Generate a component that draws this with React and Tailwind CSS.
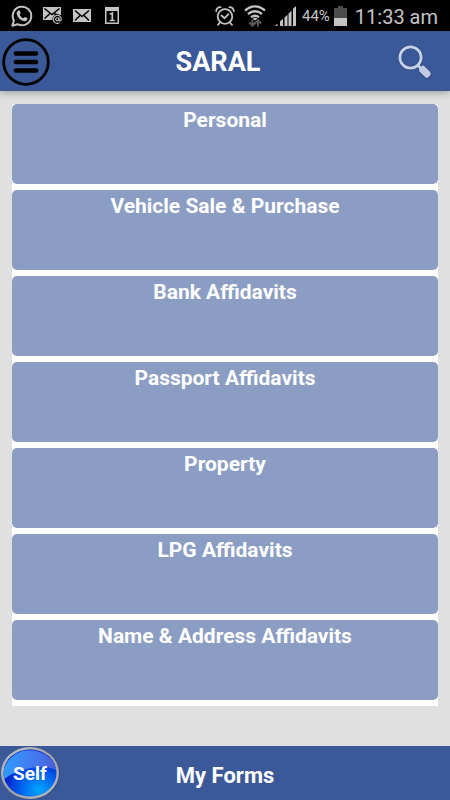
import React from "react";

const categories = [
  "Personal",
  "Vehicle Sale & Purchase",
  "Bank Affidavits",
  "Passport Affidavits",
  "Property",
  "LPG Affidavits",
  "Name & Address Affidavits",
];

function WhatsAppIcon() {
  return (
    <svg width="22" height="22" viewBox="0 0 22 22" aria-hidden="true">
      <path d="M1.3 20.8 2.9 15.6A9.3 9.3 0 1 1 6.6 19.2Z" fill="none" stroke="#c4c4c4" strokeWidth="2" strokeLinejoin="round" />
      <path
        d="M7.2 5.6c.5-.5 1.2-.4 1.5.2l.9 2.1c.2.500-.9 1.4-.9 1.8.6 1.5 2 2.9 3.6 3.5.5.1 1.2-1.3 1.7-1.2l2.2 1.1c.5.300.3 1.3-.1 1.9-.8 1.1-2.3 1.4-3.7 1-3.300-1-5.800-3.500-6.600-6.400-.4-1.500.3-3.100 1.400-4Z"
        fill="#c4c4c4"
      />
    </svg>
  );
}

function MailAtIcon() {
  return (
    <svg width="20" height="18" viewBox="0 0 20 18" aria-hidden="true">
      <path d="M0 0h18v8.500a5 5 0 0 0-7.500 4.500H0Z" fill="#c4c4c4" />
      <path d="m1.500 1.500 7.500 6 7.500-6M1.500 11.500 7 6.500M16.500 9 11 6.500" fill="none" stroke="#000" strokeWidth="1.600" />
      <circle cx="14.500" cy="12.500" r="5.200" fill="#000" />
      <circle cx="14.300" cy="12.300" r="1.600" fill="none" stroke="#c4c4c4" strokeWidth="1.100" />
      <path d="M16 10.500v2.400c0 1.600 2.300 1.300 2.300-.7a4 4 0 1 0-1.700 3.400" fill="none" stroke="#c4c4c4" strokeWidth="1.100" />
    </svg>
  );
}

function MailIcon() {
  return (
    <svg width="18" height="13" viewBox="0 0 18 13" aria-hidden="true">
      <path d="M0 0h18v13H0Z" fill="#c4c4c4" />
      <path d="m2 1.500 7 6 7-6M2 11.500l5-5M16 11.500l-5-5" fill="none" stroke="#000" strokeWidth="1.500" />
    </svg>
  );
}

function CalendarIcon() {
  return (
    <svg width="14" height="17" viewBox="0 0 14 17" aria-hidden="true">
      <path d="M0 0h14v17H0Z" fill="#c4c4c4" />
      <path d="M1.500 4h11v11.500h-11Z" fill="#000" />
      <path d="M4.800 7.200 7.300 6v8M4.800 13.500h5" fill="none" stroke="#c4c4c4" strokeWidth="1.700" />
    </svg>
  );
}

function AlarmIcon() {
  return (
    <svg width="20" height="20" viewBox="0 0 20 20" aria-hidden="true">
      <g fill="none" stroke="#c4c4c4" strokeWidth="1.800" strokeLinecap="round">
        <circle cx="10" cy="10.500" r="7.300" />
        <path d="M1.200 5A4 4 0 0 1 5.500 1.200M18.800 5a4 4 0 0 0-4.300-3.800M5 16.500l-2 2.300M15 16.500l2 2.300" />
        <path d="m6.500 9.500 3 2.700 4-4" />
      </g>
    </svg>
  );
}

function WifiIcon() {
  return (
    <svg width="22" height="22" viewBox="0 0 22 22" aria-hidden="true">
      <g fill="none" stroke="#c4c4c4" strokeWidth="2.300">
        <path d="M1 5.500Q11-2.700 21 5.500M4 9q7-5.500 14 0M7 12.200q4-3 8 0" />
      </g>
      <path d="m11 15.500-2.500-2.100q2.500-1.500 5 0Z" fill="#c4c4c4" />
      <path d="M8.500 14.500v6M5.500 17.500l3 3.300 3-3.300M14 21.500v-6M11 18.500l3-3.300 3 3.300" fill="none" stroke="#5a5a5a" strokeWidth="2" />
    </svg>
  );
}

function SignalIcon() {
  return (
    <svg width="21" height="20" viewBox="0 0 21 20" aria-hidden="true">
      <path d="M0 20 2.500 17.500V20ZM5 15.500l3-2.800V20H5ZM9.500 11.500l3-2.800V20h-3ZM13.500 7.500l3-2.800V20h-3ZM18 2.800 21 0v20h-3Z" fill="#c4c4c4" />
    </svg>
  );
}

function BatteryIcon() {
  return (
    <svg width="13" height="20" viewBox="0 0 13 20" aria-hidden="true">
      <path d="M4 0h5v2h4v10H0V2h4Z" fill="#4c4c4c" />
      <path d="M0 12h13v8H0Z" fill="#c4c4c4" />
    </svg>
  );
}

function MenuIcon() {
  return (
    <svg width="48" height="48" viewBox="0 0 48 48" aria-hidden="true">
      <circle cx="24" cy="24" r="22.300" fill="none" stroke="#000" strokeWidth="2.800" />
      <path d="M14 15.500h20M14 24h20M14 32.500h20" stroke="#000" strokeWidth="4.600" strokeLinecap="round" />
    </svg>
  );
}

function SearchIcon() {
  return (
    <svg width="34" height="35" viewBox="0 0 34 35" aria-hidden="true">
      <g fill="none" stroke="#2b457f" strokeOpacity=".45">
        <circle cx="12.500" cy="12.500" r="10.600" strokeWidth="4.600" />
        <path d="m24.500 24.500 4.500 5" strokeWidth="9.500" strokeLinecap="round" />
      </g>
      <circle cx="12.500" cy="12.500" r="10.600" fill="none" stroke="#c9d1e6" strokeWidth="2.700" />
      <path d="m19.800 20.200 3 3" stroke="#c9d1e6" strokeWidth="2.800" />
      <path d="m21.500 23.500 2.300-2.600q1.400-.8 2.600.3l5.800 5.900q1.200 1.600 0 3.200l-1.900 1.900q-1.600 1-3 0L21.500 26.500q-1-1.500 0-3Z" fill="#c1cae2" />
    </svg>
  );
}

function Orb() {
  return (
    <svg className="block" width="60" height="54" viewBox="0 0 60 54" aria-hidden="true">
      <defs>
        <linearGradient id="rim" x1="0" y1="0" x2="1" y2="1">
          <stop offset="0" stopColor="#c2c5ca" />
          <stop offset=".5" stopColor="#9da0a8" />
          <stop offset="1" stopColor="#b9bbc0" />
        </linearGradient>
        <radialGradient id="deep" cx=".67" cy=".86" r=".7">
          <stop offset="0" stopColor="#00a8ff" />
          <stop offset=".45" stopColor="#0068f0" />
          <stop offset="1" stopColor="#0018c8" />
        </radialGradient>
        <linearGradient id="gloss" x1="0" y1=".4" x2="1" y2=".5">
          <stop offset="0" stopColor="#2f9dfc" />
          <stop offset=".5" stopColor="#437df0" />
          <stop offset="1" stopColor="#4a60dc" />
        </linearGradient>
      </defs>
      <ellipse cx="30.500" cy="27.500" rx="29.300" ry="26" fill="#2c4377" />
      <ellipse cx="30" cy="27" rx="29" ry="26" fill="url(#rim)" />
      <ellipse cx="30" cy="27" rx="26.500" ry="23.600" fill="url(#deep)" />
      <path d="M4.300 33A26.500 23.600 0 1 1 56.300 24Q46 19 31 22 14 25 4.300 33Z" fill="url(#gloss)" />
    </svg>
  );
}

export default function App() {
  return (
    <div className="flex min-h-screen flex-col bg-[#e0e0e0] font-['Roboto',sans-serif]">
      <div className="flex h-[31px] items-center justify-between bg-black pr-3 pl-[11px] text-[#c4c4c4]">
        <div className="flex items-center gap-[10px]">
          <WhatsAppIcon />
          <MailAtIcon />
          <MailIcon />
          <div className="pl-1">
            <CalendarIcon />
          </div>
        </div>
        <div className="flex items-center">
          <div className="flex items-center gap-[9px]">
            <AlarmIcon />
            <WifiIcon />
            <SignalIcon />
          </div>
          <span className="pt-[2px] pl-[6px] text-[15px]">44%</span>
          <div className="pr-2 pl-1">
            <BatteryIcon />
          </div>
          <span className="pt-[2px] text-xl whitespace-nowrap">11:33 am</span>
        </div>
      </div>

      <header className="z-10 grid h-[60px] grid-cols-[1fr_auto_1fr] items-center bg-[#3b5998] px-[2px] pt-[2px] shadow-[0_1px_8px_rgba(0,0,0,0.35)]">
        <button type="button" aria-label="Menu" className="justify-self-start">
          <MenuIcon />
        </button>
        <h1 className="pr-[14px] text-[27px] font-bold text-white">SARAL</h1>
        <button type="button" aria-label="Search" className="justify-self-end pr-4">
          <SearchIcon />
        </button>
      </header>

      <main className="flex-1 px-3 pt-[13px]">
        <div className="flex flex-col gap-[6px] bg-white pb-[6px]">
          {categories.map((name) => (
            <button
              key={name}
              type="button"
              className="flex h-20 items-start justify-center rounded-[5px] bg-[#8b9dc3] pt-[2px] text-[21px] leading-7 font-bold text-white"
            >
              {name}
            </button>
          ))}
        </div>
      </main>

      <footer className="grid h-[54px] grid-cols-[1fr_auto_1fr] items-center bg-[#3b5998] text-white">
        <button type="button" className="grid place-items-center justify-self-start">
          <span className="col-start-1 row-start-1">
            <Orb />
          </span>
          <span className="z-10 col-start-1 row-start-1 pt-[2px] text-[19px] font-bold">Self</span>
        </button>
        <button type="button" className="pt-1 text-[22px] font-bold">
          My Forms
        </button>
      </footer>
    </div>
  );
}
